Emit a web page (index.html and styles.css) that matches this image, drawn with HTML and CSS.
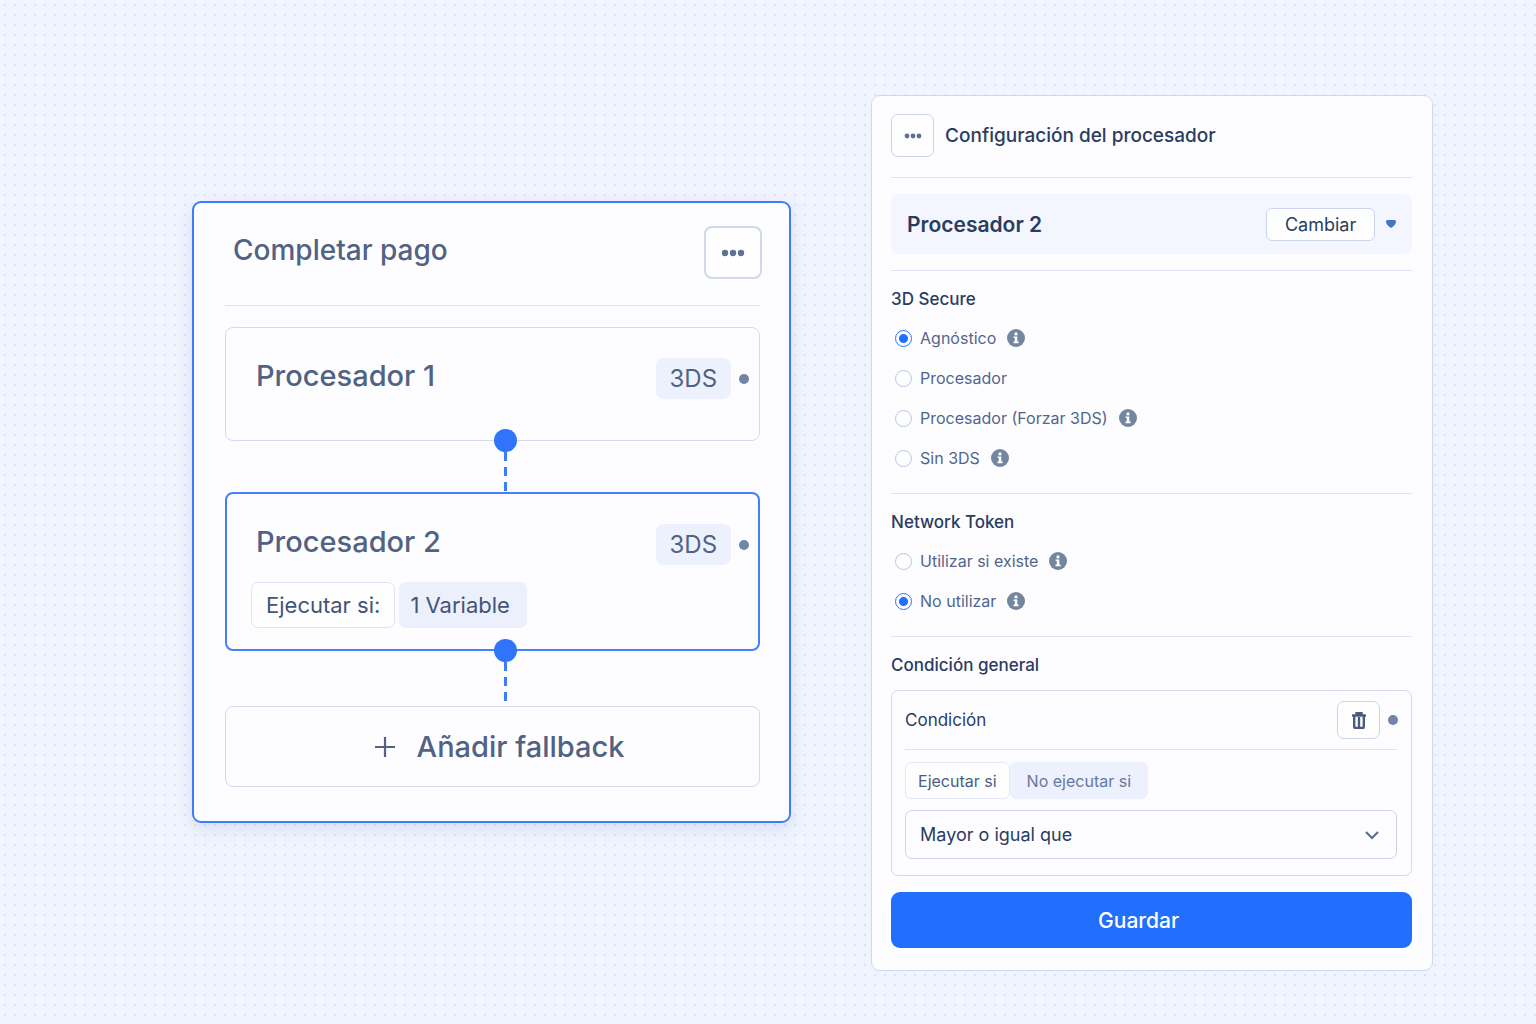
FILE: index.html
```html
<!DOCTYPE html>
<html lang="es">
  <head>
    <meta charset="UTF-8" />
    <meta name="viewport" content="width=device-width, initial-scale=1.0" />
    <title>Configuración del procesador</title>
    <link rel="stylesheet" href="styles.css">
  </head>
  <body>
    <!-- Shared icons -->
    <svg class="sprite" aria-hidden="true">
      <symbol id="icon-more" viewBox="0 0 24 8">
        <circle cx="4" cy="4" r="3.2" /><circle cx="12" cy="4" r="3.2" /><circle cx="20" cy="4" r="3.2" />
      </symbol>
      <symbol id="icon-info" viewBox="0 0 18 18">
        <circle cx="9" cy="9" r="9" />
        <circle cx="9" cy="4.9" r="1.6" fill="#fff" />
        <path d="M6.6 7.4h3.7v5.2h1.3v1.6H6.5v-1.6h1.3V9H6.6z" fill="#fff" />
      </symbol>
    </svg>

    <main class="canvas">
      <!-- Payment flow -->
      <section class="flow-card">
        <header class="flow-header">
          <h1 class="flow-title">Completar pago</h1>
          <button type="button" class="icon-button flow-more" aria-label="Más opciones">
            <svg class="more-large"><use href="#icon-more" /></svg>
          </button>
        </header>

        <article class="node">
          <div class="node-row">
            <h2 class="node-title">Procesador 1</h2>
            <span class="badge">3DS</span>
            <span class="dot"></span>
          </div>
        </article>
        <div class="connector"><span class="connector-line"></span></div>
        <article class="node node-selected">
          <div class="node-row">
            <h2 class="node-title">Procesador 2</h2>
            <span class="badge">3DS</span>
            <span class="dot"></span>
          </div>
          <div class="chips">
            <span class="chip">Ejecutar si:</span>
            <span class="chip chip-filled">1 Variable</span>
          </div>
        </article>
        <div class="connector connector-last"><span class="connector-line"></span></div>
        <button type="button" class="add-button">
          <svg class="plus" viewBox="0 0 22 22"><path d="M11 1v20M1 11h20" /></svg>
          Añadir fallback
        </button>
      </section>

      <!-- Processor settings -->
      <form class="config-card">
        <header class="config-header">
          <button type="button" class="icon-button config-more" aria-label="Más opciones">
            <svg class="more-small"><use href="#icon-more" /></svg>
          </button>
          <h2 class="config-title">Configuración del procesador</h2>
        </header>

        <div class="processor-section">
          <div class="processor">
            <strong class="processor-name">Procesador 2</strong>
            <button type="button" class="change-button">Cambiar</button>
            <svg class="caret" viewBox="0 0 10 8"><path d="M1.4 0h7.2Q10 .2 10 2 9.600 5 5 8 .4 5 0 2 0 .2 1.400 0z" /></svg>
          </div>
        </div>

        <fieldset class="group">
          <legend class="group-title">3D Secure</legend>
          <div class="option">
            <input type="radio" name="secure" id="secure-agnostic" checked>
            <label for="secure-agnostic">Agnóstico</label>
            <svg class="info"><use href="#icon-info" /></svg>
          </div>
          <div class="option">
            <input type="radio" name="secure" id="secure-processor">
            <label for="secure-processor">Procesador</label>
          </div>
          <div class="option">
            <input type="radio" name="secure" id="secure-force">
            <label for="secure-force">Procesador (Forzar 3DS)</label>
            <svg class="info"><use href="#icon-info" /></svg>
          </div>
          <div class="option">
            <input type="radio" name="secure" id="secure-none">
            <label for="secure-none">Sin 3DS</label>
            <svg class="info"><use href="#icon-info" /></svg>
          </div>
        </fieldset>

        <fieldset class="group">
          <legend class="group-title">Network Token</legend>
          <div class="option">
            <input type="radio" name="token" id="token-use">
            <label for="token-use">Utilizar si existe</label>
            <svg class="info"><use href="#icon-info" /></svg>
          </div>
          <div class="option">
            <input type="radio" name="token" id="token-skip" checked>
            <label for="token-skip">No utilizar</label>
            <svg class="info"><use href="#icon-info" /></svg>
          </div>
        </fieldset>

        <h3 class="group-title condition-heading">Condición general</h3>
        <section class="condition">
          <header class="condition-header">
            <label class="condition-title" for="operator">Condición</label>
            <button type="button" class="icon-button trash-button" aria-label="Eliminar condición">
              <svg class="trash" viewBox="0 0 14 17">
                <path d="M0 3.500h14" />
                <path d="M4.500 2.500h5V1h-5z" />
                <path d="M2.200 4v10.800q0 1.200 1.200 1.200h7.200q1.200 0 1.200-1.200V4" />
                <path d="M7 5v10" />
              </svg>
            </button>
            <span class="dot"></span>
          </header>
          <div class="tabs">
            <button type="button" class="tab tab-active">Ejecutar si</button>
            <button type="button" class="tab">No ejecutar si</button>
          </div>
          <div class="select-wrap">
            <select class="select" id="operator">
              <option>Mayor o igual que</option>
            </select>
            <svg class="chevron" viewBox="0 0 14 9"><path d="M1 1l6 6 6-6" /></svg>
          </div>
        </section>

        <button type="submit" class="save-button">Guardar</button>
      </form>
    </main>
  </body>
</html>
```
FILE: styles.css
```css
/* Base */
* { box-sizing: border-box; }
body { margin: 0; min-height: 100vh; font-family: Inter, "Liberation Sans", sans-serif; color: #2b3c60; background-color: #f0f4ff; background-image: radial-gradient(circle, #dce3f2 1px, transparent 1px); background-size: 10px 10px; }
h1, h2, h3, fieldset, legend { margin: 0; padding: 0; border: 0; font-weight: 500; }
button, select, input { margin: 0; font: inherit; color: inherit; }
button { padding: 0; cursor: pointer; }
svg { flex: none; }
.sprite { position: absolute; width: 0; height: 0; }

.canvas { display: grid; grid-template-columns: 599fr 562fr; gap: 80px; align-items: start; padding: 95px 6.7% 53px 12.5%; }

.icon-button { display: flex; align-items: center; justify-content: center; flex: none; background-color: #fefeff; border: 1px solid #cbd4ea; color: #5f7092; }
.dot { flex: none; width: 10px; height: 10px; border-radius: 50%; background-color: #7185a8; }

/* Payment flow */
.flow-card { margin-top: 106px; padding: 0 29px 34px 31px; background-color: #fdfdff; border: 2px solid #3d7dfb; border-radius: 9px; box-shadow: 0 6px 16px rgba(70, 100, 180, 0.14); }
.flow-header { display: flex; justify-content: space-between; align-items: flex-start; height: 103px; margin-bottom: 21px; padding: 23px 0 0 8px; border-bottom: 1px solid #dde4f6; }
.flow-title, .node-title { flex: 1; font-size: 29px; line-height: 36px; color: #526283; }
.flow-title { padding-top: 6px; font-size: 28px; }
.flow-more { width: 58px; height: 53px; margin-right: -2px; border: 2px solid #d0d8ec; border-radius: 8px; }
.more-large { width: 24px; height: 8px; fill: currentColor; }
.node { padding: 30px 10px 41px 30px; background-color: #fdfdff; border: 1px solid #d3daef; border-radius: 8px; }
.node-selected { padding: 30px 9px 21px 29px; border: 2px solid #4380fa; }
.node-row { display: flex; align-items: flex-start; }
.badge { padding: 0 14px; font-size: 24px; line-height: 41px; color: #526283; background-color: #edf1fd; border-radius: 8px; }
.node .dot { margin: 16px 0 0 8px; }
.chips { display: flex; gap: 4px; margin: 17px 0 0 -5px; }
.chip { padding: 0 14px; font-size: 22px; line-height: 44px; color: #445474; background-color: #fefeff; border: 1px solid #dfe5f7; border-radius: 7px; }
.chip-filled { padding: 0 16px 0 10px; background-color: #ecf0fd; border-color: #ecf0fd; }

/* Connector: dashed line starting from a round handle on the node edge */
.connector { position: relative; height: 51px; padding-left: 52%; }
.connector-last { height: 55px; }
.connector-line { display: block; width: 3px; height: 100%; margin-left: 1px; background: repeating-linear-gradient(#3d7dfb 0 5px, transparent 5px 11px, #3d7dfb 11px 15px); }
.connector::before { content: ""; position: absolute; left: 52%; top: -12px; width: 23px; height: 23px; margin-left: -9px; border-radius: 50%; background-color: #2f74fa; }
.add-button { display: flex; align-items: center; justify-content: center; gap: 21px; width: 100%; height: 81px; padding-left: 13px; font-size: 29px; font-weight: 500; color: #526283; background-color: #fdfdff; border: 1px solid #d3daef; border-radius: 8px; }
.plus { width: 22px; height: 22px; fill: none; stroke: currentColor; stroke-width: 2.2; }

/* Processor settings */
.config-card { padding: 18px 20px 22px 19px; background-color: #fdfdff; border: 1px solid #cfd8ec; border-radius: 9px; }
.config-header { display: flex; align-items: center; gap: 11px; padding-bottom: 20px; border-bottom: 1px solid #dde4f6; }
.config-more { width: 43px; height: 43px; border-radius: 7px; }
.more-small { width: 18px; height: 6px; fill: currentColor; }
.config-title { font-size: 19px; }
.processor-section { padding: 16px 0; border-bottom: 1px solid #dde4f6; }
.processor { display: flex; align-items: center; height: 60px; padding: 0 16px; background-color: #f3f6fe; border-radius: 7px; }
.processor-name { flex: 1; font-size: 21px; font-weight: 600; }
.change-button { width: 109px; height: 33px; font-size: 18px; background-color: #fefeff; border: 1px solid #cbd4ea; border-radius: 6px; }
.caret { width: 10px; height: 8px; margin-left: 11px; fill: #4672c8; }

.group { padding: 17px 0 15px; border-bottom: 1px solid #dde4f6; }
.group-title { float: left; width: 100%; font-size: 17px; line-height: 22px; }
.option { clear: both; display: flex; align-items: center; height: 40px; padding-left: 4px; font-size: 16px; font-weight: 400; color: #53658a; }
.group-title + .option { height: 48px; padding-top: 8px; }
.option input { appearance: none; flex: none; width: 17px; height: 17px; margin-right: 8px; border: 1px solid #b9c5df; border-radius: 50%; background-color: #fefeff; }
.option input:checked { border-color: #2f74fa; background: radial-gradient(circle, #2170fd 4px, transparent 5px); }
.info { width: 18px; height: 18px; margin-left: 11px; fill: #74869f; }

.condition-heading { float: none; padding: 17px 0 14px; }
.condition { padding: 10px 14px 16px 13px; border: 1px solid #d3daef; border-radius: 7px; }
.condition-header { display: flex; align-items: center; padding-bottom: 10px; border-bottom: 1px solid #dde4f6; }
.condition-title { flex: 1; font-size: 17px; }
.trash-button { width: 43px; height: 38px; border-radius: 7px; }
.trash { width: 14px; height: 17px; fill: none; stroke: #4b5b7e; stroke-width: 2.4; }
.condition-header .dot { margin: 0 -1px 0 8px; }
.tabs { display: flex; margin: 12px 0 11px; }
.tab { height: 37px; padding: 0 17px; font-size: 16px; color: #66789c; background-color: #edf1fe; border: 0; border-radius: 6px; }
.tab-active { padding: 0 12px; color: #4b5d82; background-color: #fefeff; border: 1px solid #e1e7f8; }
.select-wrap { position: relative; }
.select { appearance: none; display: block; width: 100%; height: 49px; padding: 0 44px 0 14px; font-size: 18px; background-color: #fdfdff; border: 1px solid #cbd4ea; border-radius: 7px; }
.chevron { position: absolute; right: 18px; top: 21px; width: 14px; height: 9px; fill: none; stroke: #5a6b8c; stroke-width: 2; pointer-events: none; }
.save-button { display: block; width: 100%; height: 56px; margin-top: 16px; padding-right: 26px; font-size: 21px; font-weight: 500; color: #fff; background-color: #2170fd; border: 0; border-radius: 9px; }
```
